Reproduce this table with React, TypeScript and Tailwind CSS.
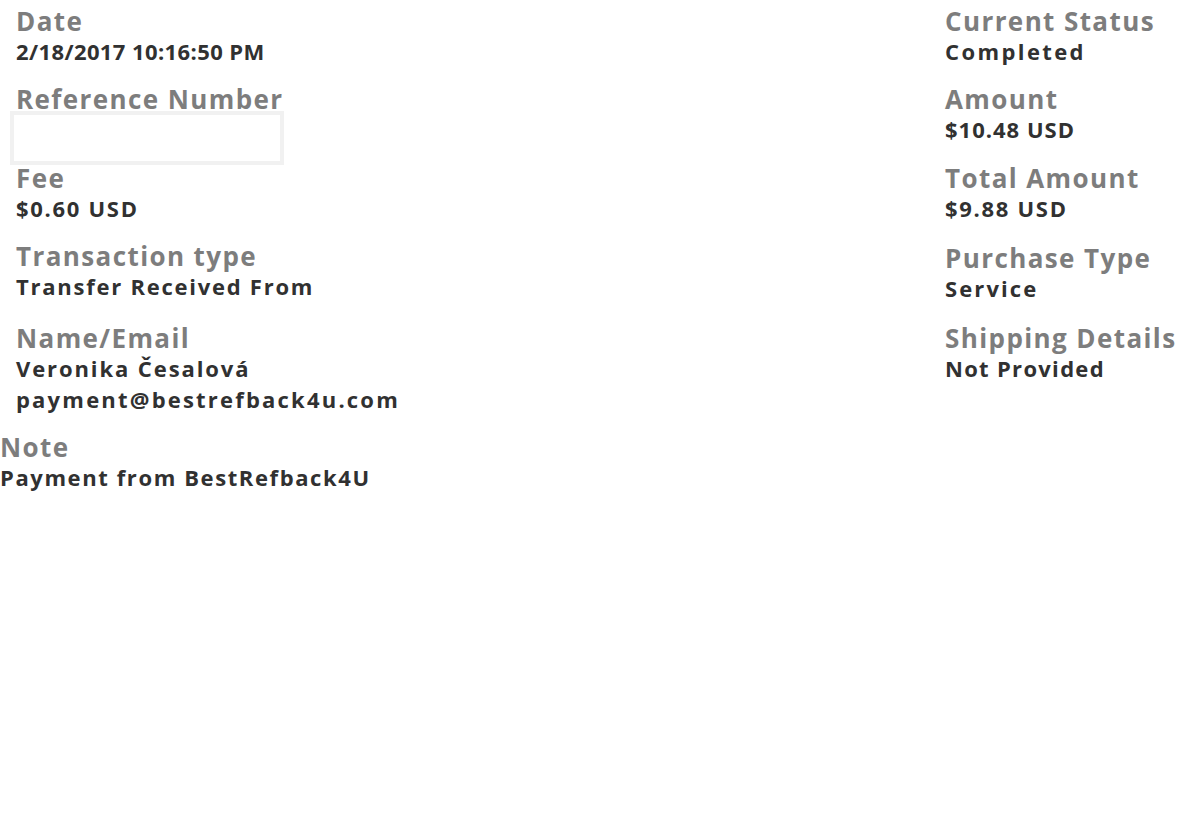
import React from "react";

const font = { fontFamily: '"Open Sans", "Noto Sans", sans-serif' };

function Label({ children, className = "" }: { children: React.ReactNode; className?: string }) {
  return (
    <div className={`whitespace-nowrap text-[26px] font-bold leading-[30px] tracking-[1.4px] text-[#7d7d7d] ${className}`}>
      {children}
    </div>
  );
}

// tracking differs per line: the original face is much wider than Open Sans
function Value({ children, track }: { children: React.ReactNode; track: string }) {
  return (
    <div className={`whitespace-nowrap text-[22px] font-bold leading-[31px] text-[#313131] ${track}`}>
      {children}
    </div>
  );
}

export default function App() {
  return (
    <div className="min-h-[826px] w-[1190px] bg-white pt-[6px]" style={font}>
      <div className="flex">
        <div className="flex flex-1 flex-col pl-4">
          <Label>Date</Label>
          <Value track="tracking-[0.4px]">2/18/2017 10:16:50 PM</Value>

          <Label className="mt-[17px]">Reference Number</Label>
          <div className="-ml-[6px] -mt-[3px] h-[54px] w-[274px] border-4 border-[#f1f1f1] bg-white" />

          <Label className="-mt-[2px]">Fee</Label>
          <Value track="tracking-[1.7px]">$0.60 USD</Value>

          <Label className="mt-[17px]">Transaction type</Label>
          <Value track="tracking-[1.75px]">Transfer Received From</Value>

          <Label className="mt-[21px]">Name/Email</Label>
          <Value track="tracking-[1.9px]">Veronika Česalová</Value>
          <Value track="tracking-[2.2px]">payment@bestrefback4u.com</Value>
        </div>

        <div className="flex w-[245px] flex-col">
          <Label>Current Status</Label>
          <Value track="tracking-[2.4px]">Completed</Value>

          <Label className="mt-[17px]">Amount</Label>
          <Value track="tracking-[1px]">$10.48 USD</Value>

          <Label className="mt-[18px]">Total Amount</Label>
          <Value track="tracking-[1.7px]">$9.88 USD</Value>

          <Label className="mt-[19px]">Purchase Type</Label>
          <Value track="tracking-[2.1px]">Service</Value>

          <Label className="mt-[19px]">Shipping Details</Label>
          <Value track="tracking-[1.3px]">Not Provided</Value>
        </div>
      </div>

      <div className="mt-[17px]">
        <Label>Note</Label>
        <Value track="tracking-[1.6px]">Payment from BestRefback4U</Value>
      </div>
    </div>
  );
}
